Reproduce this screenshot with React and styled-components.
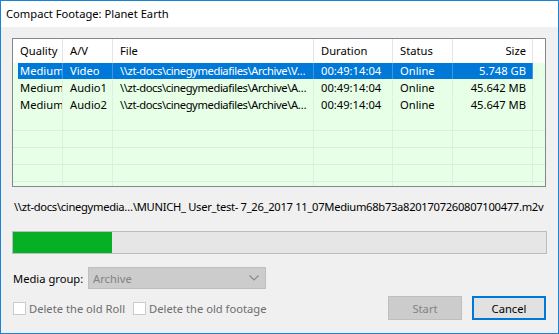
import styled, { createGlobalStyle } from 'styled-components';

const Global = createGlobalStyle`
   html, body { margin: 0; padding: 0; background: #f0f0f0; }
   body { font-family: "Noto Sans", "Liberation Sans", sans-serif; font-size: 11.2px; color: #000; }
`

// 창 전체
const Window = styled.div`
   width: 559px;
   height: 334px;
   box-sizing: border-box;
   border: 1px solid #1883d7;
   background: #f0f0f0;
   display: flex;
   flex-direction: column;
`
const TitleBar = styled.div`
   height: 26px;
   background: #fff;
   padding-left: 5px;
   line-height: 25px;
   font-size: 11.2px;
`
const Body = styled.div`
   padding: 11px 12px 0 11px;
   display: flex;
   flex-direction: column;
`

// 리스트
const COLS = '50px 50px 201px 79px 60px 80px 1fr';

const ListBox = styled.div`
   width: 534px;
   height: 149px;
   box-sizing: border-box;
   border: 1px solid #828790;
   background: #e6ffe6;
   overflow: hidden;
`
const Header = styled.div`
   display: grid;
   grid-template-columns: ${COLS};
   height: 24px;
   background: #fff;
`
const HeadCell = styled.div`
   padding: 0 6px 0 7px;
   line-height: 24px;
   border-right: 1px solid ${(props) => (props.last ? 'transparent' : '#e5e5e5')};
   text-align: ${(props) => (props.right ? 'right' : 'left')};
   white-space: nowrap;
`
const Row = styled.div`
   display: grid;
   grid-template-columns: ${COLS};
   height: 17px;
   box-sizing: border-box;
   border-bottom: 1px solid ${(props) => (props.empty ? '#dcefdc' : 'transparent')};
`
const Cell = styled.div`
   padding: 0 6px 0 7px;
   line-height: 16px;
   white-space: nowrap;
   overflow: hidden;
   text-align: ${(props) => (props.right ? 'right' : 'left')};
   color: ${(props) => (props.sel ? '#fff' : '#000')};
   background: ${(props) =>
      props.sel
         ? props.first
            ? 'linear-gradient(90deg, transparent 5px, #0078d7 5px)'
            : '#0078d7'
         : 'transparent'};
   border-right: 1px solid ${(props) =>
      props.last ? 'transparent' : props.sel ? '#3d97e0' : '#dcefdc'};
   ${(props) => props.last && props.sel && 'background: transparent;'}
   ${(props) => props.first && 'padding-right: 0;'}
   ${(props) => props.path && 'padding-right: 0; letter-spacing: -0.4px;'}
`

const PathText = styled.div`
   margin-top: 12px;
   line-height: 16px;
   white-space: nowrap;
   overflow: hidden;
   padding-left: 2px;
   letter-spacing: -0.3px;
`

const Progress = styled.div`
   margin-top: 16px;
   width: 535px;
   height: 23px;
   box-sizing: border-box;
   border: 1px solid #bcbcbc;
   background: #e6e6e6;
`
const Fill = styled.div`
   height: 100%;
   background: #06b025;
`

const GroupRow = styled.div`
   margin-top: 13px;
   display: flex;
   align-items: center;
   padding-left: 1px;
`
const GroupLabel = styled.span`
   width: 75px;
   white-space: nowrap;
`
const Combo = styled.div`
   width: 178px;
   height: 22px;
   box-sizing: border-box;
   border: 1px solid #bfbfbf;
   background: #cccccc;
   color: #838383;
   display: flex;
   align-items: center;
   justify-content: space-between;
   padding: 0 6px 0 4px;
`

const BottomRow = styled.div`
   margin-top: 7px;
   display: flex;
   align-items: center;
   padding-left: 1px;
`
const Check = styled.label`
   display: flex;
   align-items: center;
   gap: 3px;
   color: #6d6d6d;
   margin-right: 8px;
`
const Box = styled.span`
   width: 13px;
   height: 13px;
   box-sizing: border-box;
   border: 1px solid #cccccc;
   background: #fff;
`
const Spacer = styled.div`
   flex: 1;
`
const Button = styled.div`
   width: 74px;
   height: 24px;
   box-sizing: border-box;
   display: flex;
   align-items: center;
   justify-content: center;
   margin-left: ${(props) => (props.gap ? '10px' : '0')};
   border: ${(props) => (props.primary ? '2px solid #0078d7' : '1px solid #bfbfbf')};
   background: ${(props) => (props.disabled ? '#cccccc' : '#e1e1e1')};
   color: ${(props) => (props.disabled ? '#838383' : '#000')};
`

const rows = [
   ['Medium', 'Video', String.raw`\\zt-docs\cinegymediafiles\Archive\V…`, '00:49:14:04', 'Online', '5.748 GB'],
   ['Medium', 'Audio1', String.raw`\\zt-docs\cinegymediafiles\Archive\A…`, '00:49:14:04', 'Online', '45.642 MB'],
   ['Medium', 'Audio2', String.raw`\\zt-docs\cinegymediafiles\Archive\A…`, '00:49:14:04', 'Online', '45.647 MB'],
];

const headers = ['Quality', 'A/V', 'File', 'Duration', 'Status', 'Size'];

export default function App() {
   return (
      <>
         <Global />
         <Window>
            <TitleBar>Compact Footage: Planet Earth</TitleBar>
            <Body>
               <ListBox>
                  <Header>
                     {headers.map((h, i) => (
                        <HeadCell key={h} right={i === 5}>{h}</HeadCell>
                     ))}
                     <HeadCell last />
                  </Header>
                  {rows.map((r, ri) => (
                     <Row key={ri}>
                        {r.map((c, ci) => (
                           <Cell key={ci} sel={ri === 0} first={ci === 0} path={ci === 2} right={ci === 5}>{c}</Cell>
                        ))}
                        <Cell sel={ri === 0} last />
                     </Row>
                  ))}
                  {[0, 1, 2, 3, 4].map((k) => (
                     <Row key={'e' + k} empty>
                        {[0, 1, 2, 3, 4, 5].map((ci) => <Cell key={ci} />)}
                        <Cell last />
                     </Row>
                  ))}
               </ListBox>

               <PathText>{String.raw`\\zt-docs\cinegymedia…\MUNICH_ User_test- 7_26_2017 11_07Medium68b73a8201707260807100477.m2v`}</PathText>

               <Progress>
                  <Fill style={{ width: '99px' }} />
               </Progress>

               <GroupRow>
                  <GroupLabel>Media group:</GroupLabel>
                  <Combo>
                     <span>Archive</span>
                     <svg width="10" height="6" viewBox="0 0 10 6">
                        <path d="M0.5 0.5 L5 5 L9.5 0.5" fill="none" stroke="#8a8a8a" strokeWidth="1.2" />
                     </svg>
                  </Combo>
               </GroupRow>

               <BottomRow>
                  <Check><Box />Delete the old Roll</Check>
                  <Check><Box />Delete the old footage</Check>
                  <Spacer />
                  <Button disabled>Start</Button>
                  <Button primary gap>Cancel</Button>
               </BottomRow>
            </Body>
         </Window>
      </>
   )
}
